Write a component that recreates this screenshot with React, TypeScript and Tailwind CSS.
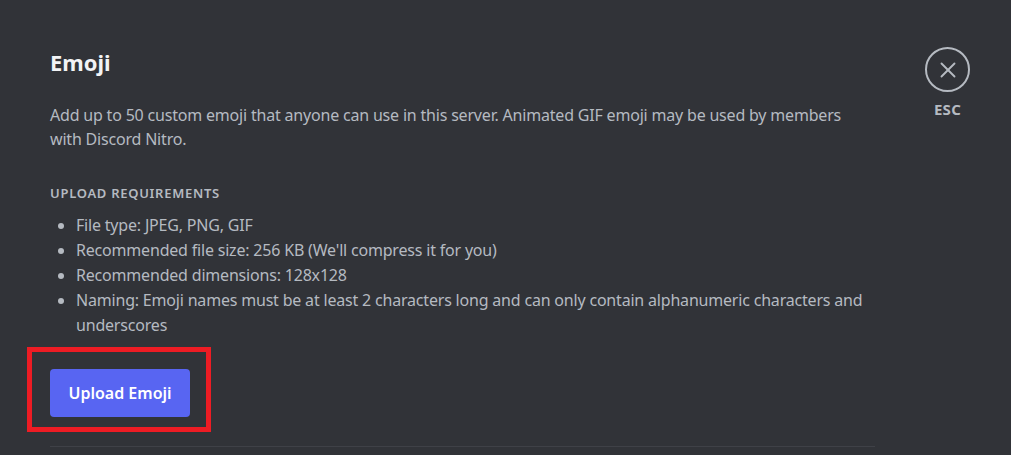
import { X } from "lucide-react";

const requirements = [
  "File type: JPEG, PNG, GIF",
  "Recommended file size: 256 KB (We'll compress it for you)",
  "Recommended dimensions: 128x128",
  "Naming: Emoji names must be at least 2 characters long and can only contain alphanumeric characters and underscores",
];

export default function App() {
  return (
    <div
      className="h-[455px] w-full overflow-hidden bg-[#313338] text-[#b5bac1]"
      style={{ fontFamily: '"Noto Sans", "Open Sans", sans-serif' }}
    >
      <div className="flex pl-[50px] pt-[48px]">
        <div className="w-[825px]">
          <h1 className="text-[22px] font-bold leading-[28px] text-[#f2f3f5]">Emoji</h1>

          <p className="mt-[27px] text-[16px] leading-[24px] tracking-[-0.012em]">
            Add up to 50 custom emoji that anyone can use in this server. Animated GIF emoji may be used by members
            with Discord Nitro.
          </p>

          <h2 className="mt-[34px] text-[13px] font-semibold uppercase leading-[16px] tracking-[0.055em] text-[#b5bac1]">
            Upload Requirements
          </h2>

          <ul className="mt-[12px] list-disc pl-[26px] text-[16px] leading-[25px] tracking-[-0.012em] marker:text-[#b5bac1]">
            {requirements.map((item) => (
              <li key={item}>{item}</li>
            ))}
          </ul>

          <div className="mt-[9px] ml-[-23px] inline-block border-[5px] border-[#ed1c24] pb-[10px] pl-[18px] pr-[16px] pt-[17px]">
            <button className="flex h-[48px] w-[140px] items-center justify-center rounded-[4px] bg-[#5865f2] text-[16px] font-semibold text-white">
              Upload Emoji
            </button>
          </div>

          <div className="mt-[14px] h-px w-full bg-[#3f4147]" />
        </div>

        <div className="ml-[50px] mt-[-1px] flex flex-col items-center">
          <div className="flex h-[45px] w-[45px] items-center justify-center rounded-full border-2 border-[#b5bac1]">
            <X size={26} strokeWidth={1.75} />
          </div>
          <span className="mt-[7px] text-[15px] font-bold leading-[20px] tracking-[0.02em]">ESC</span>
        </div>
      </div>
    </div>
  );
}
